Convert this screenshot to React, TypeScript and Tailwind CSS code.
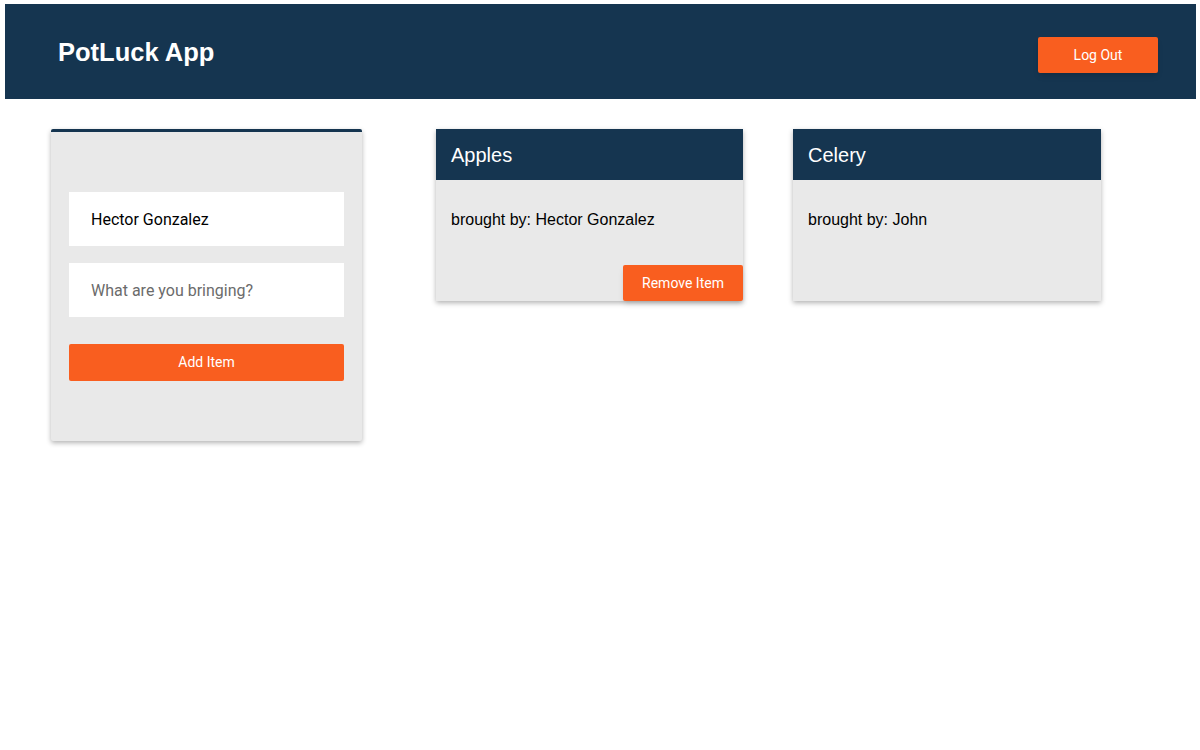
import { useState } from "react";

type Item = { id: number; name: string; by: string; mine: boolean };

const items: Item[] = [
  { id: 1, name: "Apples", by: "Hector Gonzalez", mine: true },
  { id: 2, name: "Celery", by: "John", mine: false },
];

export default function App() {
  const [food, setFood] = useState("");

  return (
    <div className="min-h-[750px] bg-white p-[4px_4px_0_5px] font-['Liberation_Sans',Arial,sans-serif]">
      <header className="flex h-[95px] items-start justify-between bg-[#153550] pl-[53px] pr-[38px]">
        <h1 className="mt-[33px] text-[25.5px] font-bold leading-[30px] text-white">PotLuck App</h1>
        <button className="mt-[33px] h-[36px] w-[120px] rounded-[2px] bg-[#f95e1f] font-['Roboto',sans-serif] text-[14px] text-white shadow-md">
          Log Out
        </button>
      </header>

      <main className="flex items-start pt-[30px]">
        <form
          onSubmit={(e) => e.preventDefault()}
          className="ml-[46px] flex h-[312px] w-[311px] flex-col rounded-[2px] border-t-[3px] border-[#153550] bg-[#e9e9e9] px-[18px] pt-[60px] shadow-[0_2px_5px_rgba(0,0,0,0.3)]"
        >
          <input
            value="Hector Gonzalez"
            readOnly
            className="h-[54px] w-full bg-white px-[22px] font-['Roboto',sans-serif] text-[16px] text-black outline-none"
          />
          <input
            value={food}
            onChange={(e) => setFood(e.target.value)}
            placeholder="What are you bringing?"
            className="mt-[17px] h-[54px] w-full bg-white px-[22px] font-['Roboto',sans-serif] text-[16px] text-black outline-none placeholder:text-[#6b6b6b]"
          />
          <button
            type="submit"
            className="mt-[27px] h-[37px] w-full rounded-[2px] bg-[#f95e1f] font-['Roboto',sans-serif] text-[14px] text-white"
          >
            Add Item
          </button>
        </form>

        <div className="ml-[74px] flex gap-[50px]">
          {items.map((it) => (
            <div
              key={it.id}
              className="flex h-[172px] w-[307px] flex-col bg-[#e9e9e9] shadow-[0_2px_5px_rgba(0,0,0,0.3)] last:w-[308px]"
            >
              <div className="flex h-[51px] items-center bg-[#153550] px-[15px] text-[20px] text-white">
                {it.name}
              </div>
              <p className="mt-[30px] px-[15px] text-[16px] leading-[20px] text-black">
                brought by: {it.by}
              </p>
              {it.mine && (
                <button className="mt-auto ml-auto h-[36px] w-[120px] rounded-[2px] bg-[#f95e1f] font-['Roboto',sans-serif] text-[14px] text-white shadow-md">
                  Remove Item
                </button>
              )}
            </div>
          ))}
        </div>
      </main>
    </div>
  );
}
